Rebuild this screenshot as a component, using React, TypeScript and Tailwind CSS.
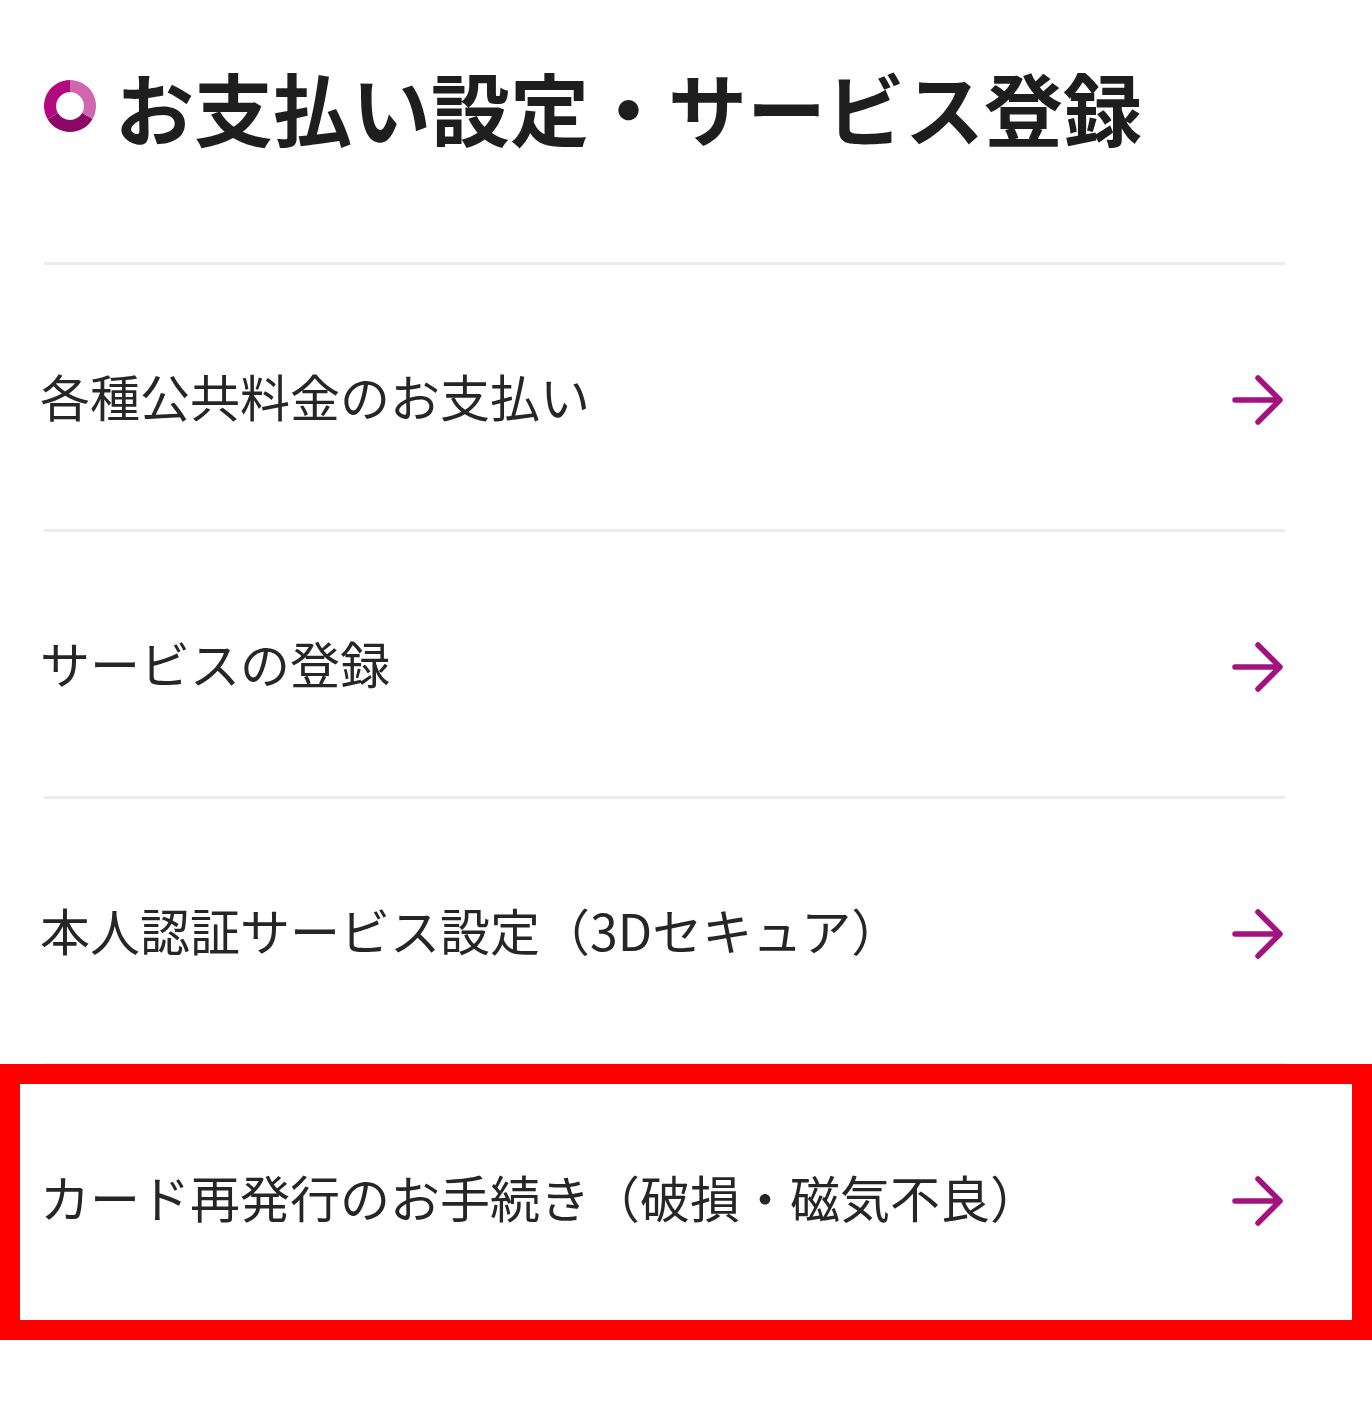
import React from "react";

const items = [
  "各種公共料金のお支払い",
  "サービスの登録",
  "本人認証サービス設定（3Dセキュア）",
  "カード再発行のお手続き（破損・磁気不良）",
];

function Ring() {
  const seg = (a0: number, a1: number) => {
    const R = 26, r = 14, c = 26;
    const p = (rad: number, a: number) => {
      const t = ((a - 90) * Math.PI) / 180;
      return `${c + rad * Math.cos(t)} ${c + rad * Math.sin(t)}`;
    };
    return `M ${p(R, a0)} A ${R} ${R} 0 0 1 ${p(R, a1)} L ${p(r, a1)} A ${r} ${r} 0 0 0 ${p(r, a0)} Z`;
  };
  return (
    <svg width="52" height="52" viewBox="0 0 52 52" className="shrink-0">
      <path d={seg(0, 120)} fill="#d066ad" />
      <path d={seg(120, 240)} fill="#8c0768" />
      <path d={seg(240, 360)} fill="#b3077f" />
    </svg>
  );
}

function Arrow() {
  return (
    <svg width="52" height="50" viewBox="0 0 52 50" className="shrink-0 mt-[6px]">
      <path
        d="M3 25 H47 M26 3 L48 25 L26 47"
        fill="none"
        stroke="#a3127f"
        strokeWidth="5.5"
        strokeLinecap="round"
        strokeLinejoin="round"
      />
    </svg>
  );
}

export default function App() {
  return (
    <div
      className="relative w-[1372px] h-[1425px] bg-white text-[#222222]"
      style={{ fontFamily: '"Noto Sans CJK JP", "Noto Sans", sans-serif' }}
    >
      <div className="h-[262px] pb-[50px] pl-[44px] flex items-center gap-[19px]">
        <Ring />
        <h1 className="text-[79px] leading-none font-bold text-[#1e1e1e]">
          お支払い設定・サービス登録
        </h1>
      </div>
      {items.map((t) => (
        <div key={t}>
          <div className="mx-[44px] w-[1241px] h-[3px] bg-[#ececec]" />
          <div className="h-[264px] flex items-center justify-between pl-[40px] pr-[88px]">
            <span className="text-[50px] leading-none text-[#262626] -mt-[4px]">{t}</span>
            <Arrow />
          </div>
        </div>
      ))}
      <div className="absolute left-0 right-0 top-[1064px] h-[276px] border-[20px] border-[#ff0000]" />
    </div>
  );
}
